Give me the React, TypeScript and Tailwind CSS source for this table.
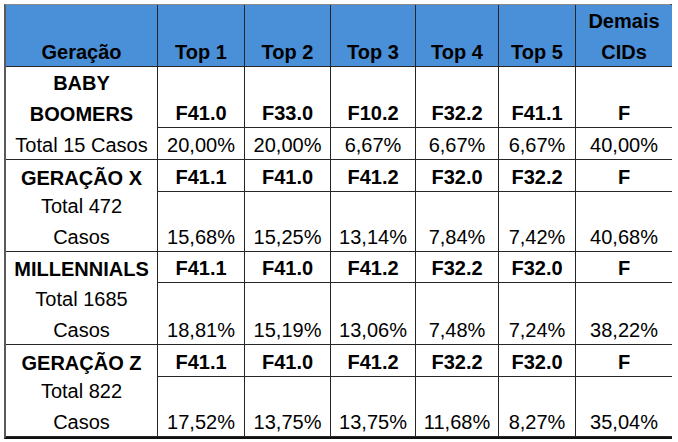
import React from "react";

type Cell = { lines: string[]; bold?: boolean; noBottom?: boolean; header?: boolean };

const widths = [152, 87, 86, 85, 83, 77, 96];

const header: Cell[] = [
  { lines: ["Geração"], bold: true, header: true },
  { lines: ["Top 1"], bold: true, header: true },
  { lines: ["Top 2"], bold: true, header: true },
  { lines: ["Top 3"], bold: true, header: true },
  { lines: ["Top 4"], bold: true, header: true },
  { lines: ["Top 5"], bold: true, header: true },
  { lines: ["Demais", "CIDs"], bold: true, header: true },
];

const groups: { name: string[]; total: string[]; codes: string[]; pcts: string[] }[] = [
  {
    name: ["BABY", "BOOMERS"],
    total: ["Total 15 Casos"],
    codes: ["F41.0", "F33.0", "F10.2", "F32.2", "F41.1", "F"],
    pcts: ["20,00%", "20,00%", "6,67%", "6,67%", "6,67%", "40,00%"],
  },
  {
    name: ["GERAÇÃO X"],
    total: ["Total 472", "Casos"],
    codes: ["F41.1", "F41.0", "F41.2", "F32.0", "F32.2", "F"],
    pcts: ["15,68%", "15,25%", "13,14%", "7,84%", "7,42%", "40,68%"],
  },
  {
    name: ["MILLENNIALS"],
    total: ["Total 1685", "Casos"],
    codes: ["F41.1", "F41.0", "F41.2", "F32.2", "F32.0", "F"],
    pcts: ["18,81%", "15,19%", "13,06%", "7,48%", "7,24%", "38,22%"],
  },
  {
    name: ["GERAÇÃO Z"],
    total: ["Total 822", "Casos"],
    codes: ["F41.1", "F41.0", "F41.2", "F32.2", "F32.0", "F"],
    pcts: ["17,52%", "13,75%", "13,75%", "11,68%", "8,27%", "35,04%"],
  },
];

function CellBox({ cell, last }: { cell: Cell; last: boolean }) {
  return (
    <div
      className={
        "flex flex-col items-center justify-end text-center leading-[31px] whitespace-nowrap " +
        (cell.bold ? "font-bold " : "font-normal ") +
        (cell.header ? "bg-[#4a90d9] " : "bg-white ") +
        (cell.noBottom ? "" : "border-b border-b-[#262626] ") +
        (last ? "" : "border-r border-r-[#262626]")
      }
    >
      {cell.lines.map((l, i) => (
        <span key={i} className="translate-y-[2px]">
          {l}
        </span>
      ))}
    </div>
  );
}

export default function App() {
  const rows: Cell[][] = [header];
  groups.forEach((g) => {
    rows.push([
      { lines: g.name, bold: true, noBottom: true },
      ...g.codes.map((c) => ({ lines: [c], bold: true })),
    ]);
    rows.push([{ lines: g.total }, ...g.pcts.map((p) => ({ lines: [p] }))]);
  });

  return (
    <div className="w-[678px] h-[442px] bg-white pt-[4px] pl-[4px]">
      <div
        className="grid w-[668px] border-l-2 border-l-[#5a5a5a] border-t border-t-[#8a8a8a] border-r-2 border-r-[#1a1a1a] border-b-2 border-b-[#111] text-[20px] text-black"
        style={{
          gridTemplateColumns: widths.map((w) => w + "px").join(" "),
          gridTemplateRows: "62px 61px 32px 32px 60px 31px 62px 32px 60px",
          fontFamily: '"Liberation Sans", Arial, sans-serif',
        }}
      >
        {rows.map((r, ri) =>
          r.map((c, ci) => <CellBox key={ri + "-" + ci} cell={c} last={ci === r.length - 1} />)
        )}
      </div>
    </div>
  );
}
